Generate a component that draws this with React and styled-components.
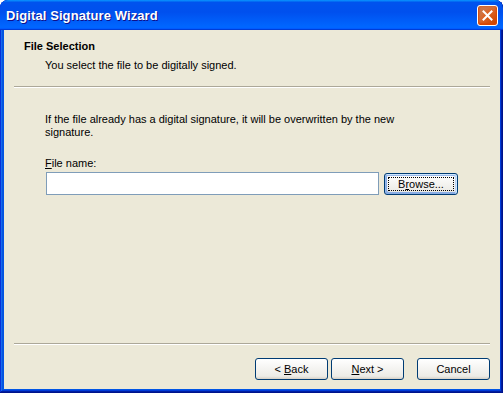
import styled, { createGlobalStyle } from "styled-components"

const GlobalStyle = createGlobalStyle`
    html, body {
        margin: 0;
        padding: 0;
        background: #ffffff;
    }

    body {
        font-family: "Liberation Sans", Arial, sans-serif;
        font-size: 11px;
        color: #000000;
    }
`

const StyledWindow = styled.div`
    width: 503px;
    height: 393px;
    display: flex;
    flex-direction: column;
    background: #0055e5;
    border-radius: 8px 8px 0 0;
    overflow: hidden;
    box-shadow:
        inset -1px -1px #00138c,
        inset 1px 1px #0831d9,
        inset -2px -2px #001ea0,
        inset 2px 2px #166aee,
        inset -3px -3px #003bda,
        inset 3px 3px #0855dd;
`

const StyledTitleBar = styled.header`
    height: 30px;
    flex: none;
    display: flex;
    align-items: center;
    justify-content: space-between;
    padding: 0 5px 0 6px;
    box-sizing: border-box;
    border-radius: 8px 8px 0 0;
    background: linear-gradient(180deg, #0997ff, #0053ee 8%, #0050ee 40%, #0066ff 88%, #0066ff 93%, #005bff 95%, #003dd7 96%, #003dd7);

    h1 {
        margin: 0;
        color: #ffffff;
        font-family: "Liberation Sans", Arial, sans-serif;
        font-weight: bold;
        font-size: 13px;
        letter-spacing: 0.1px;
        text-shadow: 1px 1px #0f1089;
    }
`

const StyledClose = styled.button`
    width: 21px;
    height: 21px;
    padding: 0;
    display: flex;
    align-items: center;
    justify-content: center;
    border: 1px solid #ffffff;
    border-radius: 3px;
    background: radial-gradient(circle at 90% 90%, #cc4600 0%, #dc6527 55%, #cd7546 70%), #e35b2e;
    box-shadow: inset 0 -1px 2px 1px #da4600;

    svg {
        width: 11px;
        height: 11px;
    }
`

const StyledClient = styled.main`
    flex: 1;
    margin: 0 3px 4px 4px;
    background: #ece9d8;
    display: flex;
    flex-direction: column;
`

const StyledHeader = styled.section`
    padding: 10px 10px 0 20px;
    height: 56px;
    box-sizing: border-box;
    line-height: 13px;

    h2 {
        margin: 0;
        font-size: 11px;
        font-weight: bold;
    }

    p {
        margin: 6px 0 0 21px;
    }
`

const StyledRule = styled.hr`
    margin: 0 10px;
    height: 0;
    border: none;
    border-top: 1px solid #aca899;
    border-bottom: 1px solid #ffffff;
`

const StyledBody = styled.section`
    flex: 1;
    padding: 25px 30px 0 41px;
    line-height: 13px;

    p {
        margin: 0;
        width: 370px;
    }

    label {
        display: block;
        margin-top: 18px;
    }
`

const StyledFileRow = styled.div`
    display: flex;
    align-items: center;
    gap: 5px;
    margin-top: 2px;
`

const StyledInput = styled.input`
    width: 333px;
    height: 23px;
    margin-left: 1px;
    box-sizing: border-box;
    border: 1px solid #7f9db9;
    background: #ffffff;
    outline: none;
    font-family: "Liberation Sans", Arial, sans-serif;
    font-size: 11px;
`

const StyledButton = styled.button`
    width: ${(p) => p.$width || 73}px;
    height: 22px;
    padding: 0;
    box-sizing: border-box;
    border: 1px solid #003c74;
    border-radius: 3px;
    background: linear-gradient(180deg, #ffffff, #ecebe6 86%, #d6d0c5);
    font-family: "Liberation Sans", Arial, sans-serif;
    font-size: 11px;
    color: #000000;
    position: relative;
    box-shadow: ${(p) =>
        p.$focused
            ? "inset -1px 1px #cee7ff, inset 1px 2px #98b8ea, inset -2px 2px #bcd4f6, inset 1px -1px #89ade4, inset 2px -2px #89ade4"
            : "none"};

    &::after {
        content: "";
        display: ${(p) => (p.$focused ? "block" : "none")};
        position: absolute;
        inset: 3px;
        border: 1px dotted #000000;
    }

    u {
        text-decoration: underline;
    }
`

const StyledFooter = styled.footer`
    display: flex;
    justify-content: flex-end;
    align-items: center;
    padding: 13px 10px 9px 0;
    gap: 3px;

    > :last-child {
        margin-left: 10px;
    }
`

function App() {
    return (
        <>
            <GlobalStyle />
            <StyledWindow>
                <StyledTitleBar>
                    <h1>Digital Signature Wizard</h1>
                    <StyledClose aria-label="Close">
                        <svg viewBox="0 0 11 11">
                            <path d="M1.5 1.5 L9.5 9.5 M9.5 1.5 L1.5 9.5" stroke="#ffffff" strokeWidth="2" strokeLinecap="square" />
                        </svg>
                    </StyledClose>
                </StyledTitleBar>
                <StyledClient>
                    <StyledHeader>
                        <h2>File Selection</h2>
                        <p>You select the file to be digitally signed.</p>
                    </StyledHeader>
                    <StyledRule />
                    <StyledBody>
                        <p>If the file already has a digital signature, it will be overwritten by the new signature.</p>
                        <label htmlFor="file"><u>F</u>ile name:</label>
                        <StyledFileRow>
                            <StyledInput id="file" type="text" />
                            <StyledButton $width={74} $focused>B<u>r</u>owse...</StyledButton>
                        </StyledFileRow>
                    </StyledBody>
                    <StyledRule />
                    <StyledFooter>
                        <StyledButton>&lt; <u>B</u>ack</StyledButton>
                        <StyledButton><u>N</u>ext &gt;</StyledButton>
                        <StyledButton>Cancel</StyledButton>
                    </StyledFooter>
                </StyledClient>
            </StyledWindow>
        </>
    )
}

export default App
